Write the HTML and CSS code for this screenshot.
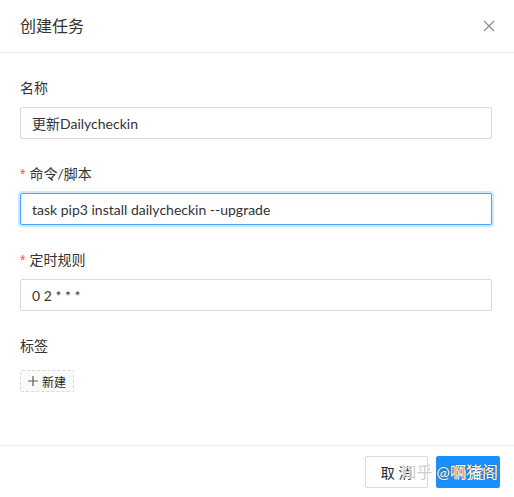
FILE: index.html
```html
<!DOCTYPE html>
<html lang="zh-CN">
<head>
    <meta charset="UTF-8">
    <meta name="viewport" content="width=device-width, initial-scale=1.0">
    <title>创建任务</title>
    <link rel="stylesheet" href="styles.css">
</head>
<body>
    <div class="modal">
        <div class="modal-header">
            <div class="modal-title">创建任务</div>
            <span class="modal-close">
                <svg width="12" height="12" viewBox="0 0 12 12">
                    <path d="M1 1 L11 11 M11 1 L1 11" stroke="#8c8c8c" stroke-width="1.2" fill="none"/>
                </svg>
            </span>
        </div>

        <div class="modal-body">
            <div class="form-item">
                <label class="form-label">名称</label>
                <input class="form-input" type="text" value="更新Dailycheckin">
            </div>
            <div class="form-item">
                <label class="form-label required">命令/脚本</label>
                <input class="form-input focused" type="text" value="task pip3 install dailycheckin --upgrade">
            </div>
            <div class="form-item">
                <label class="form-label required">定时规则</label>
                <input class="form-input" type="text" value="0 2 * * *">
            </div>
            <div class="form-item">
                <label class="form-label">标签</label>
                <div class="tag-row">
                    <span class="tag-new">
                        <svg width="10" height="10" viewBox="0 0 10 10">
                            <path d="M5 0 V10 M0 5 H10" stroke="#595959" stroke-width="1.2" fill="none"/>
                        </svg>
                        新建
                    </span>
                </div>
            </div>
        </div>

        <div class="modal-footer">
            <button class="btn">取 消</button>
            <button class="btn btn-primary">确 定</button>
            <div class="watermark"><span class="wm-site">知乎</span> <span class="wm-user">@啊猪阁</span></div>
        </div>
    </div>
</body>
</html>
```

FILE: styles.css
```css
body {
    margin: 0;
    background: #fff;
    font-family: Lato, "Noto Sans CJK SC", sans-serif;
    font-size: 14px;
    color: #262626;
}
.modal {
    width: 514px;
    position: relative;
}
.modal-header {
    height: 53px;
    padding: 0 20px;
    display: flex;
    align-items: center;
    justify-content: space-between;
    border-bottom: 1px solid #f0f0f0;
    box-sizing: border-box;
}
.modal-title {
    font-size: 16px;
    color: #333;
    line-height: 22px;
}
.modal-close {
    display: flex;
    margin-right: -1px;
}
.modal-body {
    padding: 24px 22px 24px 20px;
}
.form-item {
    margin-bottom: 24px;
}
.form-label {
    display: block;
    line-height: 22px;
    padding-bottom: 8px;
    color: #333;
}
.form-label.required::before {
    content: "*";
    color: #ff4d4f;
    margin-right: 4px;
    font-family: "Liberation Sans", sans-serif;
}
.form-input {
    display: block;
    width: 100%;
    height: 32px;
    box-sizing: border-box;
    padding: 4px 11px;
    border: 1px solid #d9d9d9;
    border-radius: 2px;
    font-family: inherit;
    font-size: 14px;
    color: #333;
    outline: none;
}
.form-input.focused {
    border-color: #40a9ff;
    box-shadow: 0 0 0 2px rgba(24, 144, 255, 0.2);
}
.tag-row {
    height: 32px;
    display: flex;
    align-items: center;
}
.tag-new {
    display: inline-flex;
    align-items: center;
    gap: 4px;
    height: 22px;
    box-sizing: border-box;
    padding: 0 7px;
    border: 1px dashed #d9d9d9;
    border-radius: 2px;
    background: #fafafa;
    font-size: 12px;
    color: #262626;
}
.modal-footer {
    border-top: 1px solid #f0f0f0;
    padding: 10px 14px 10px 16px;
    display: flex;
    justify-content: flex-end;
    gap: 8px;
    position: relative;
}
.btn {
    height: 32px;
    padding: 4px 15px;
    border: 1px solid #d9d9d9;
    border-radius: 2px;
    background: #fff;
    font-family: inherit;
    font-size: 14px;
    color: #262626;
}
.btn-primary {
    background: #1890ff;
    border-color: #1890ff;
    color: #fff;
}
.watermark {
    position: absolute;
    right: 16px;
    top: 15px;
    font-size: 16px;
    line-height: 22px;
    color: #fff;
    white-space: nowrap;
}
.wm-site {
    color: #d0d0d0;
    text-shadow: 0 0 1px #fff;
}
.wm-user {
    text-shadow: 0 0 1px #555, 0 0 1px #555;
}
```
